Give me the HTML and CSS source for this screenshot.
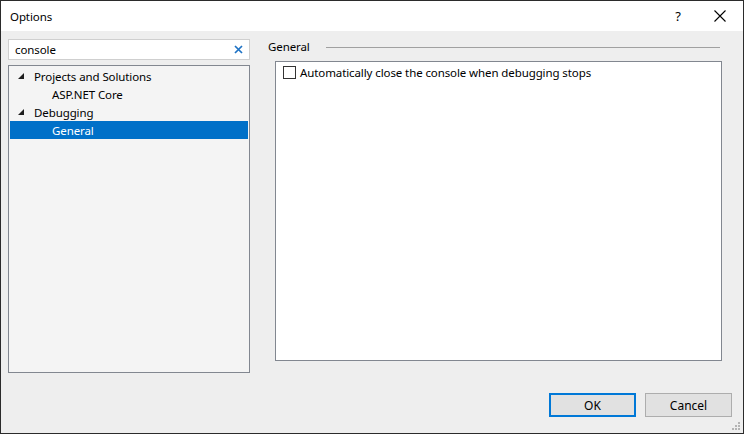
FILE: index.html
```html
<!DOCTYPE html>
<html>
<head>
<meta charset="utf-8">
<link rel="stylesheet" href="styles.css">
</head>
<body>
<div class="window">
  <div class="titlebar">
    <span class="title">Options</span>
    <span class="tb-help">?</span>
    <span class="tb-close"><svg width="12" height="12" viewBox="0 0 12 12"><path d="M0.5 0.5 L11.5 11.5 M11.5 0.5 L0.5 11.5" stroke="#000" stroke-width="1.1" fill="none"/></svg></span>
  </div>
  <div class="body">
    <div class="main">
      <div class="left">
        <div class="search">
          <span class="search-text">console</span>
          <svg class="clear" width="9" height="9" viewBox="0 0 9 9"><path d="M1 1 L8 8 M8 1 L1 8" stroke="#1e72c4" stroke-width="1.7" fill="none"/></svg>
        </div>
        <div class="tree">
          <div class="row"><span class="tri"></span><span class="label">Projects and Solutions</span></div>
          <div class="row lvl2"><span class="label">ASP.NET Core</span></div>
          <div class="row"><span class="tri"></span><span class="label">Debugging</span></div>
          <div class="row lvl2 sel"><span class="label">General</span></div>
        </div>
      </div>
      <div class="right">
        <div class="header"><span>General</span><span class="rule"></span></div>
        <div class="content">
          <label class="opt"><span class="cb"></span><span>Automatically close the console when debugging stops</span></label>
        </div>
      </div>
    </div>
    <div class="buttons">
      <button class="btn default">OK</button>
      <button class="btn">Cancel</button>
    </div>
    <svg class="grip" width="10" height="10" viewBox="0 0 10 10" fill="#b4b4b4">
      <rect x="7" y="1" width="2" height="2"/>
      <rect x="4" y="4" width="2" height="2"/><rect x="7" y="4" width="2" height="2"/>
      <rect x="1" y="7" width="2" height="2"/><rect x="4" y="7" width="2" height="2"/><rect x="7" y="7" width="2" height="2"/>
    </svg>
  </div>
</div>
</body>
</html>
```
FILE: styles.css
```css
html, body { margin: 0; padding: 0; }
body { font-family: "Noto Sans", "Open Sans", sans-serif; font-size: 11.5px; letter-spacing: -0.1px; color: #000; }
.window {
  width: 744px; height: 434px; box-sizing: border-box;
  border: 1px solid #2b2b2b; background: #eeeeee;
  display: flex; flex-direction: column; overflow: hidden;
}
.titlebar {
  height: 30px; background: #fff; display: flex; align-items: center;
  flex: none;
}
.title { margin-left: 9px; }
.tb-help { margin-left: auto; width: 12px; text-align: center; font-size: 13px; margin-right: 30px; }
.tb-close { width: 12px; height: 12px; margin-right: 17px; display: flex; }
.body { flex: 1; position: relative; padding: 8px 0 0 7px; display: flex; flex-direction: column; }
.main { display: flex; }
.left { width: 242px; display: flex; flex-direction: column; }
.search {
  height: 21px; box-sizing: border-box; border: 1px solid #cfcfcf; background: #fff;
  display: flex; align-items: center; padding-left: 6px; padding-right: 6px;
}
.search-text { flex: 1; line-height: 1; }
.clear { flex: none; }
.tree {
  margin-top: 5px; height: 308px; box-sizing: border-box;
  border: 1px solid #828790; background: #f4f4f4; padding: 1px;
}
.row { height: 18px; display: flex; align-items: center; }
.tri {
  width: 0; height: 0; margin-left: 8px; margin-right: 10px;
  border-left: 6px solid transparent; border-bottom: 6px solid #1e1e1e;
}
.lvl2 { padding-left: 42px; }
.sel { background: #0070c8; color: #fff; }
.right { margin-left: 18px; width: 454px; display: flex; flex-direction: column; }
.header { height: 16px; display: flex; align-items: center; margin-top: -1px; }
.rule { flex: 1; height: 1px; background: #a0a0a0; margin-left: 16px; margin-right: 2px; margin-top: 2px; }
.content {
  margin-top: 7px; margin-left: 7px; width: 447px; height: 300px; box-sizing: border-box;
  border: 1px solid #828790; background: #fff; padding: 3px 7px;
}
.opt { display: flex; align-items: center; height: 15px; }
.cb { width: 11px; height: 11px; border: 1px solid #333; background: #fff; margin-right: 4px; }
.buttons { display: flex; justify-content: flex-end; gap: 9px; margin-top: 20px; margin-right: 11px; }
.btn {
  width: 87px; height: 24px; box-sizing: border-box; background: #e1e1e1;
  border: 1px solid #adadad; font-family: inherit; font-size: 12px; color: #000; padding: 0;
}
.btn.default { border: 2px solid #0078d7; }
.grip { position: absolute; right: 2px; bottom: 2px; }
```
